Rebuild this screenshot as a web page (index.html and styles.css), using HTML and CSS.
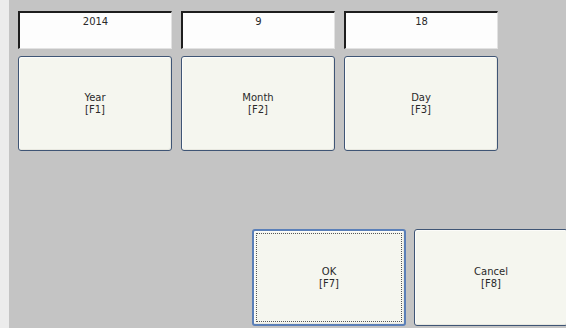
FILE: index.html
```html
<!DOCTYPE html>
<html>
<head>
<meta charset="utf-8">
<link rel="stylesheet" href="styles.css">
</head>
<body>
<div class="screen">
  <div class="strip"></div>
  <div class="panel">
    <div class="grid">
      <div class="field">2014</div>
      <div class="field">9</div>
      <div class="field">18</div>
      <button class="key">Year<br>[F1]</button>
      <button class="key">Month<br>[F2]</button>
      <button class="key">Day<br>[F3]</button>
    </div>
    <div class="actions">
      <button class="key big focused"><span class="focus">OK<br>[F7]</span></button>
      <button class="key big">Cancel<br>[F8]</button>
    </div>
  </div>
</div>
</body>
</html>
```
FILE: styles.css
```css
html, body {
  margin: 0;
  padding: 0;
}
body {
  width: 566px;
  height: 328px;
  overflow: hidden;
  background: #c4c4c4;
  font-family: "DejaVu Sans", Tahoma, sans-serif;
  font-size: 10px;
  color: #2a2a2a;
}
.screen {
  display: flex;
  height: 328px;
}
.strip {
  width: 9px;
  flex: none;
  background: #ececec;
}
.panel {
  flex: 1;
  padding: 11px 0 0 9px;
  display: flex;
  flex-direction: column;
}
.grid {
  display: grid;
  grid-template-columns: 154px 154px 154px;
  grid-template-rows: 38px 95px;
  column-gap: 9px;
  row-gap: 7px;
}
.field {
  box-sizing: border-box;
  background: #fdfdfd;
  border-top: 2px solid #1e1e1e;
  border-left: 2px solid #1e1e1e;
  border-right: 1px solid #e2e2e2;
  border-bottom: 1px solid #e2e2e2;
  text-align: center;
  line-height: 12px;
  padding-top: 3px;
}
.key {
  box-sizing: border-box;
  margin: 0;
  padding: 0;
  font: inherit;
  color: inherit;
  line-height: 12px;
  background: #f5f6ef;
  border: 1px solid #3f5575;
  border-radius: 3px;
  box-shadow: inset 1px 1px 0 #fcfcf9, inset -1px -1px 0 #e8e8e0;
  text-align: center;
}
.actions {
  display: flex;
  gap: 8px;
  margin-top: 78px;
  padding-left: 234px;
}
.big {
  width: 154px;
  height: 97px;
  flex: none;
}
.focused {
  border: 2px solid #5a7fb8;
  padding: 2px;
  display: flex;
}
.focus {
  flex: 1;
  border: 1px dotted #555;
  display: flex;
  align-items: center;
  justify-content: center;
}
```
